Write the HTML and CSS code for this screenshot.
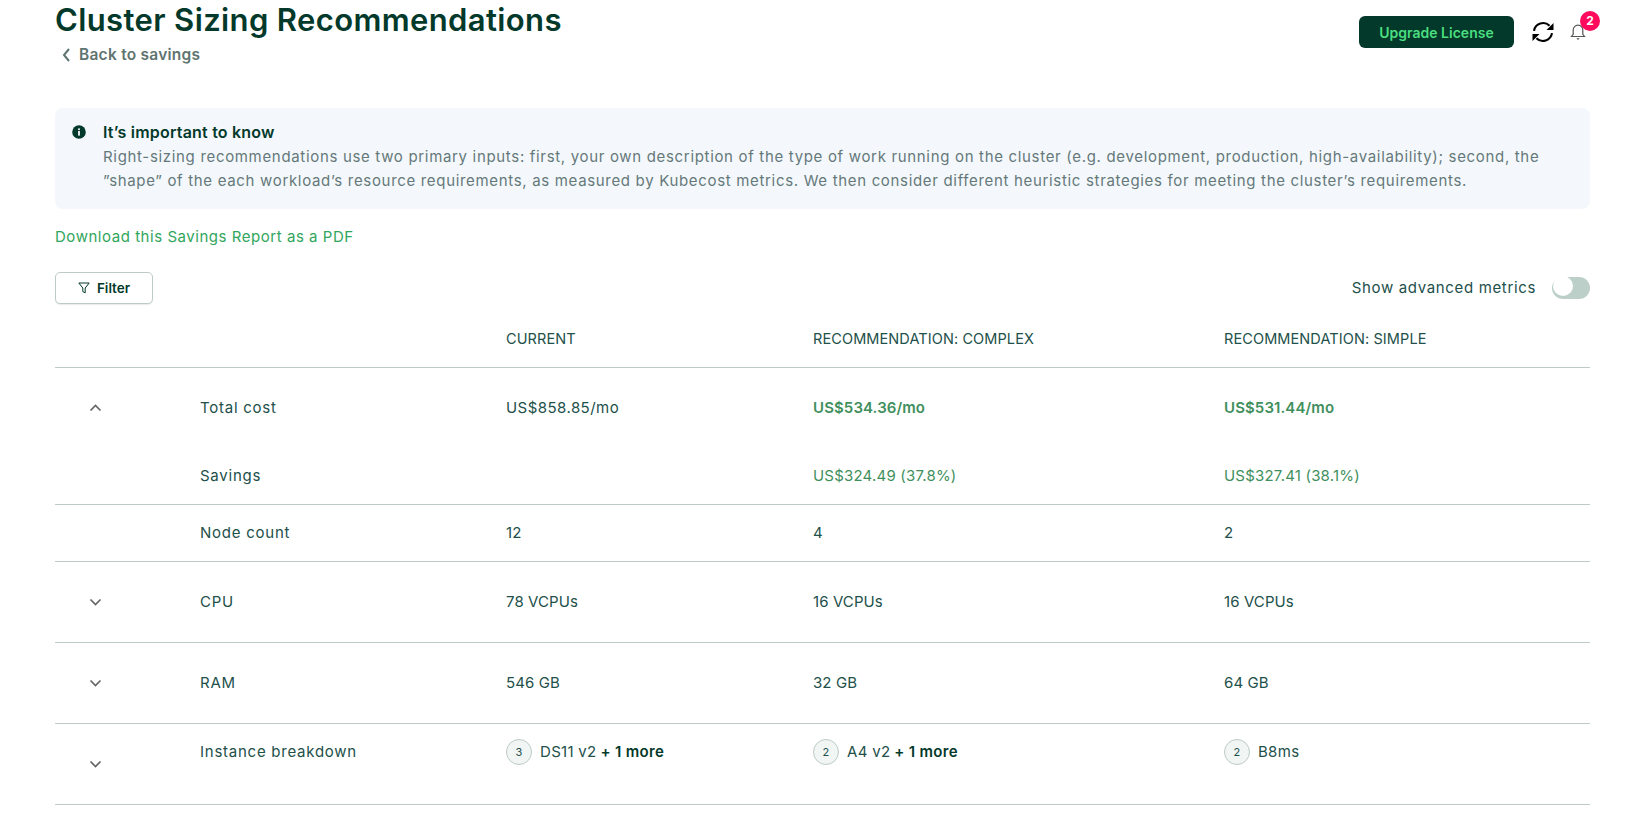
FILE: index.html
```html
<!DOCTYPE html>
<html lang="en">
<head>
<meta charset="utf-8">
<title>Cluster Sizing Recommendations</title>
<link rel="stylesheet" href="styles.css">
</head>
<body>
<main class="page">
  <header class="top">
    <div class="heading">
      <h1 class="title">Cluster Sizing Recommendations</h1>
      <a class="back"><svg class="back-icon" viewBox="0 0 10 16"><path d="M8 2 3 8l5 6" fill="none" stroke="#5f7470" stroke-width="2"/></svg>Back to savings</a>
    </div>
    <div class="actions">
      <button class="upgrade">Upgrade License</button>
      <svg class="sync" viewBox="0 0 24 24"><path d="M3 10.8A9.2 9.2 0 0 1 18.6 5.8M21 13.2A9.2 9.2 0 0 1 5.4 18.2" fill="none" stroke="#000" stroke-width="2.1"/><path d="M22.5 3v7h-7zM1.5 21v-7h7z" fill="#000"/></svg>
      <span class="bell-wrap">
        <svg class="bell" viewBox="0 0 16 18"><path d="M1.5 13.5h13l-1.7-2.2V7a4.8 4.8 0 0 0-9.6 0v4.3z" fill="none" stroke="#555" stroke-width="1.2"/><path d="M6.3 15.2h3.4L8 17z" fill="#555"/></svg>
        <span class="badge">2</span>
      </span>
    </div>
  </header>

  <section class="notice">
    <svg class="notice-icon" viewBox="0 0 14 14"><circle cx="7" cy="7" r="6.8" fill="#03392a"/><rect x="6.1" y="6" width="1.8" height="4.6" fill="#f4f8fc"/><rect x="6.1" y="3.4" width="1.8" height="1.7" fill="#f4f8fc"/></svg>
    <div>
      <div class="notice-title">It’s important to know</div>
      <p class="notice-text">Right-sizing recommendations use two primary inputs: first, your own description of the type of work running on the cluster (e.g. development, production, high-availability); second, the ”shape” of the each workload’s resource requirements, as measured by Kubecost metrics. We then consider different heuristic strategies for meeting the cluster’s requirements.</p>
    </div>
  </section>

  <a class="download">Download this Savings Report as a PDF</a>

  <div class="toolbar">
    <button class="filter"><svg class="filter-icon" viewBox="0 0 12 12"><path d="M.8 1h10.4L7.2 6v4.8L4.8 9.6V6z" fill="none" stroke="#03392a" stroke-width="1"/></svg>Filter</button>
    <div class="advanced"><span>Show advanced metrics</span><span class="switch"><span class="knob"></span></span></div>
  </div>

  <table class="grid">
    <colgroup><col class="c-chev"><col class="c-label"><col class="c-cur"><col class="c-rec"><col class="c-sim"></colgroup>
    <thead>
      <tr class="r-head"><th></th><th></th><th>CURRENT</th><th>RECOMMENDATION: COMPLEX</th><th>RECOMMENDATION: SIMPLE</th></tr>
    </thead>
    <tbody>
      <tr class="r-total"><td class="chev"><svg viewBox="0 0 12 8"><path d="M1 6.5 6 1.5l5 5" fill="none" stroke="#666" stroke-width="1.7"/></svg></td><td class="label">Total cost</td><td class="wide">US$858.85/mo</td><td class="strong-green">US$534.36/mo</td><td class="strong-green">US$531.44/mo</td></tr>
      <tr class="r-savings line"><td></td><td class="label">Savings</td><td></td><td class="green">US$324.49 (37.8%)</td><td class="green">US$327.41 (38.1%)</td></tr>
      <tr class="r-node line"><td></td><td class="label">Node count</td><td>12</td><td>4</td><td>2</td></tr>
      <tr class="r-tall line"><td class="chev"><svg viewBox="0 0 12 8"><path d="M1 1.5 6 6.5l5-5" fill="none" stroke="#666" stroke-width="1.7"/></svg></td><td class="label">CPU</td><td>78 VCPUs</td><td>16 VCPUs</td><td>16 VCPUs</td></tr>
      <tr class="r-tall line"><td class="chev"><svg viewBox="0 0 12 8"><path d="M1 1.5 6 6.5l5-5" fill="none" stroke="#666" stroke-width="1.7"/></svg></td><td class="label">RAM</td><td>546 GB</td><td>32 GB</td><td>64 GB</td></tr>
      <tr class="r-inst line">
        <td class="chev chev-low"><svg viewBox="0 0 12 8"><path d="M1 1.5 6 6.5l5-5" fill="none" stroke="#666" stroke-width="1.7"/></svg></td>
        <td class="top-cell label">Instance breakdown</td>
        <td class="top-cell"><span class="inst"><span class="count">3</span>DS11 v2 <b>+ 1 more</b></span></td>
        <td class="top-cell"><span class="inst"><span class="count">2</span>A4 v2 <b>+ 1 more</b></span></td>
        <td class="top-cell"><span class="inst"><span class="count">2</span>B8ms</span></td>
      </tr>
    </tbody>
  </table>
</main>
</body>
</html>
```

FILE: styles.css
```css
* { box-sizing: border-box; }
html, body { margin: 0; height: 100%; overflow: hidden; background: #fff; }
body { font-family: "Inter", "Liberation Sans", sans-serif; color: #03392a; font-size: 15px; }
.page { padding: 0 48px 0 55px; }

.top { display: flex; justify-content: space-between; align-items: flex-start; height: 108px; }
.title { margin: 0; font-size: 31px; line-height: 40px; font-weight: 600; letter-spacing: 0.38px; }
.back { display: flex; align-items: center; margin-top: 5px; font-size: 15.5px; line-height: 20px; font-weight: 600; letter-spacing: 0.25px; color: #5f7470; }
.back-icon { width: 10px; height: 16px; margin: 0 8px 0 6px; }

.actions { display: flex; align-items: center; padding-top: 16px; margin-right: 4px; }
.upgrade { width: 155px; height: 32px; border: 0; border-radius: 6px; background: #03392a; color: #4ade80; font: 600 14px "Inter", sans-serif; }
.sync { width: 24px; height: 24px; margin-left: 17px; }
.bell-wrap { position: relative; display: block; width: 16px; height: 18px; margin-left: 15px; }
.bell { display: block; width: 16px; height: 18px; }
.badge { position: absolute; left: 10px; top: -12px; width: 20px; height: 20px; border-radius: 50%; background: #ff0a5c; color: #fff; font-size: 12px; font-weight: 700; line-height: 20px; text-align: center; }

.notice { display: flex; height: 101px; padding: 12px 15px 0 17px; border-radius: 8px; background: #f4f8fc; }
.notice-icon { flex: none; width: 14px; height: 14px; margin: 5px 17px 0 0; }
.notice-title { margin-bottom: 1px; font-size: 16px; line-height: 24px; font-weight: 600; letter-spacing: 0.2px; }
.notice-text { margin: 0; font-size: 15px; line-height: 24px; color: #65797a; letter-spacing: 0.675px; width: 1450px; }

.download { display: block; margin-top: 18px; font-size: 15px; line-height: 20px; color: #31a65c; letter-spacing: 0.54px; }

.toolbar { display: flex; justify-content: space-between; align-items: center; margin-top: 25px; height: 32px; }
.filter { display: flex; align-items: center; justify-content: center; width: 98px; height: 32px; padding: 0; border: 1px solid #bccbc8; border-radius: 5px; background: #fff; color: #03392a; font: 600 13.5px "Inter", sans-serif; box-shadow: 0 1px 1px rgba(0,0,0,.08); }
.filter-icon { width: 12px; height: 12px; margin-right: 7px; }
.advanced { display: flex; align-items: center; font-size: 15px; letter-spacing: 0.65px; color: #22504a; }
.advanced span:first-child { margin-top: -2px; }
.switch { display: block; width: 38px; height: 22px; margin-left: 16px; padding: 1px; border-radius: 11px; background: #bccfc9; }
.knob { display: block; width: 20px; height: 20px; border-radius: 50%; background: #fff; }

.grid { width: 100%; margin-top: 16px; border-collapse: collapse; table-layout: fixed; font-size: 15px; letter-spacing: 0.1px; color: #22504a; }
.c-chev { width: 145px; }
.c-label { width: 306px; }
.c-cur { width: 307px; }
.c-rec { width: 411px; }
th { padding: 0 0 10px; font-size: 14.5px; font-weight: 400; letter-spacing: 0.1px; text-align: left; color: #22504a; }
td { padding: 0; vertical-align: middle; }
.r-head { height: 47px; border-bottom: 1px solid #bccbc8; }
.r-total { height: 79px; }
.r-total td, .r-savings td { padding-top: 2px; }
.r-savings { height: 58px; }
.r-node { height: 57px; }
.r-tall { height: 81px; }
.r-inst { height: 81px; }
.line { border-bottom: 1px solid #bccbc8; }
.label { letter-spacing: 0.75px; }
.wide { letter-spacing: 0.45px; }
.chev { padding-left: 34px; }
.chev svg { display: block; width: 13px; height: 8px; }
.chev-low svg { margin-top: 0; }
.top-cell { padding-bottom: 24px; }
.strong-green { font-weight: 600; color: #3f8f5d; }
.green { color: #3f8f5d; letter-spacing: 0.2px; }
.inst { display: flex; align-items: center; letter-spacing: 0.3px; }
.inst b { font-weight: 600; color: #03392a; margin-left: 4px; }
.count { display: flex; align-items: center; justify-content: center; width: 26px; height: 26px; margin-right: 8px; border: 1px solid #bccbc8; border-radius: 50%; background: #f1f5f4; font-size: 11px; }
```
